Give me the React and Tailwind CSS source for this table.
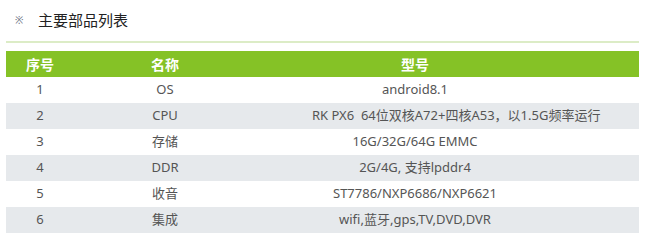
import React from "react";

const rows = [
  { no: "1", name: "OS", model: "android8.1" },
  { no: "2", name: "CPU", model: "RK PX6  64位双核A72+四核A53，以1.5G频率运行", shift: true },
  { no: "3", name: "存储", model: "16G/32G/64G EMMC" },
  { no: "4", name: "DDR", model: "2G/4G, 支持lpddr4" },
  { no: "5", name: "收音", model: "ST7786/NXP6686/NXP6621" },
  { no: "6", name: "集成", model: "wifi,蓝牙,gps,TV,DVD,DVR" },
];

const App = () => {
  return (
    <div
      className="w-[645px] h-[246px] bg-white pl-[6px] pr-[6px] pt-[9px]"
      style={{ fontFamily: '"Noto Sans", "Noto Sans CJK SC", sans-serif' }}
    >
      {/* Title */}
      <div className="flex items-center h-[22px]">
        <span className="w-[32px] pl-[9px] text-[10px] text-gray-500">※</span>
        <span className="text-[15px] text-[#222]">主要部品列表</span>
      </div>
      <div className="mt-[10px] h-[2px] bg-[#dcecc6]" />

      {/* Table */}
      <div className="mt-[8px] text-[13px] text-[#555]">
        <div className="flex h-[26px] items-center bg-[#85c226] text-white text-[14px] font-semibold">
          <div className="w-[68px] text-center">序号</div>
          <div className="w-[182px] text-center">名称</div>
          <div className="w-[318px] text-center">型号</div>
        </div>
        {rows.map((row, i) => (
          <div
            key={i}
            className={`flex h-[26px] items-center ${i % 2 === 1 ? "bg-[#e6e9ec]" : "bg-white"}`}
          >
            <div className="w-[68px] text-center">{row.no}</div>
            <div className="w-[182px] text-center">{row.name}</div>
            <div
              className={`whitespace-pre ${row.shift ? "pl-[56px] text-left" : "w-[318px] text-center"}`}
            >
              {row.model}
            </div>
          </div>
        ))}
      </div>
    </div>
  );
};

export default App;
